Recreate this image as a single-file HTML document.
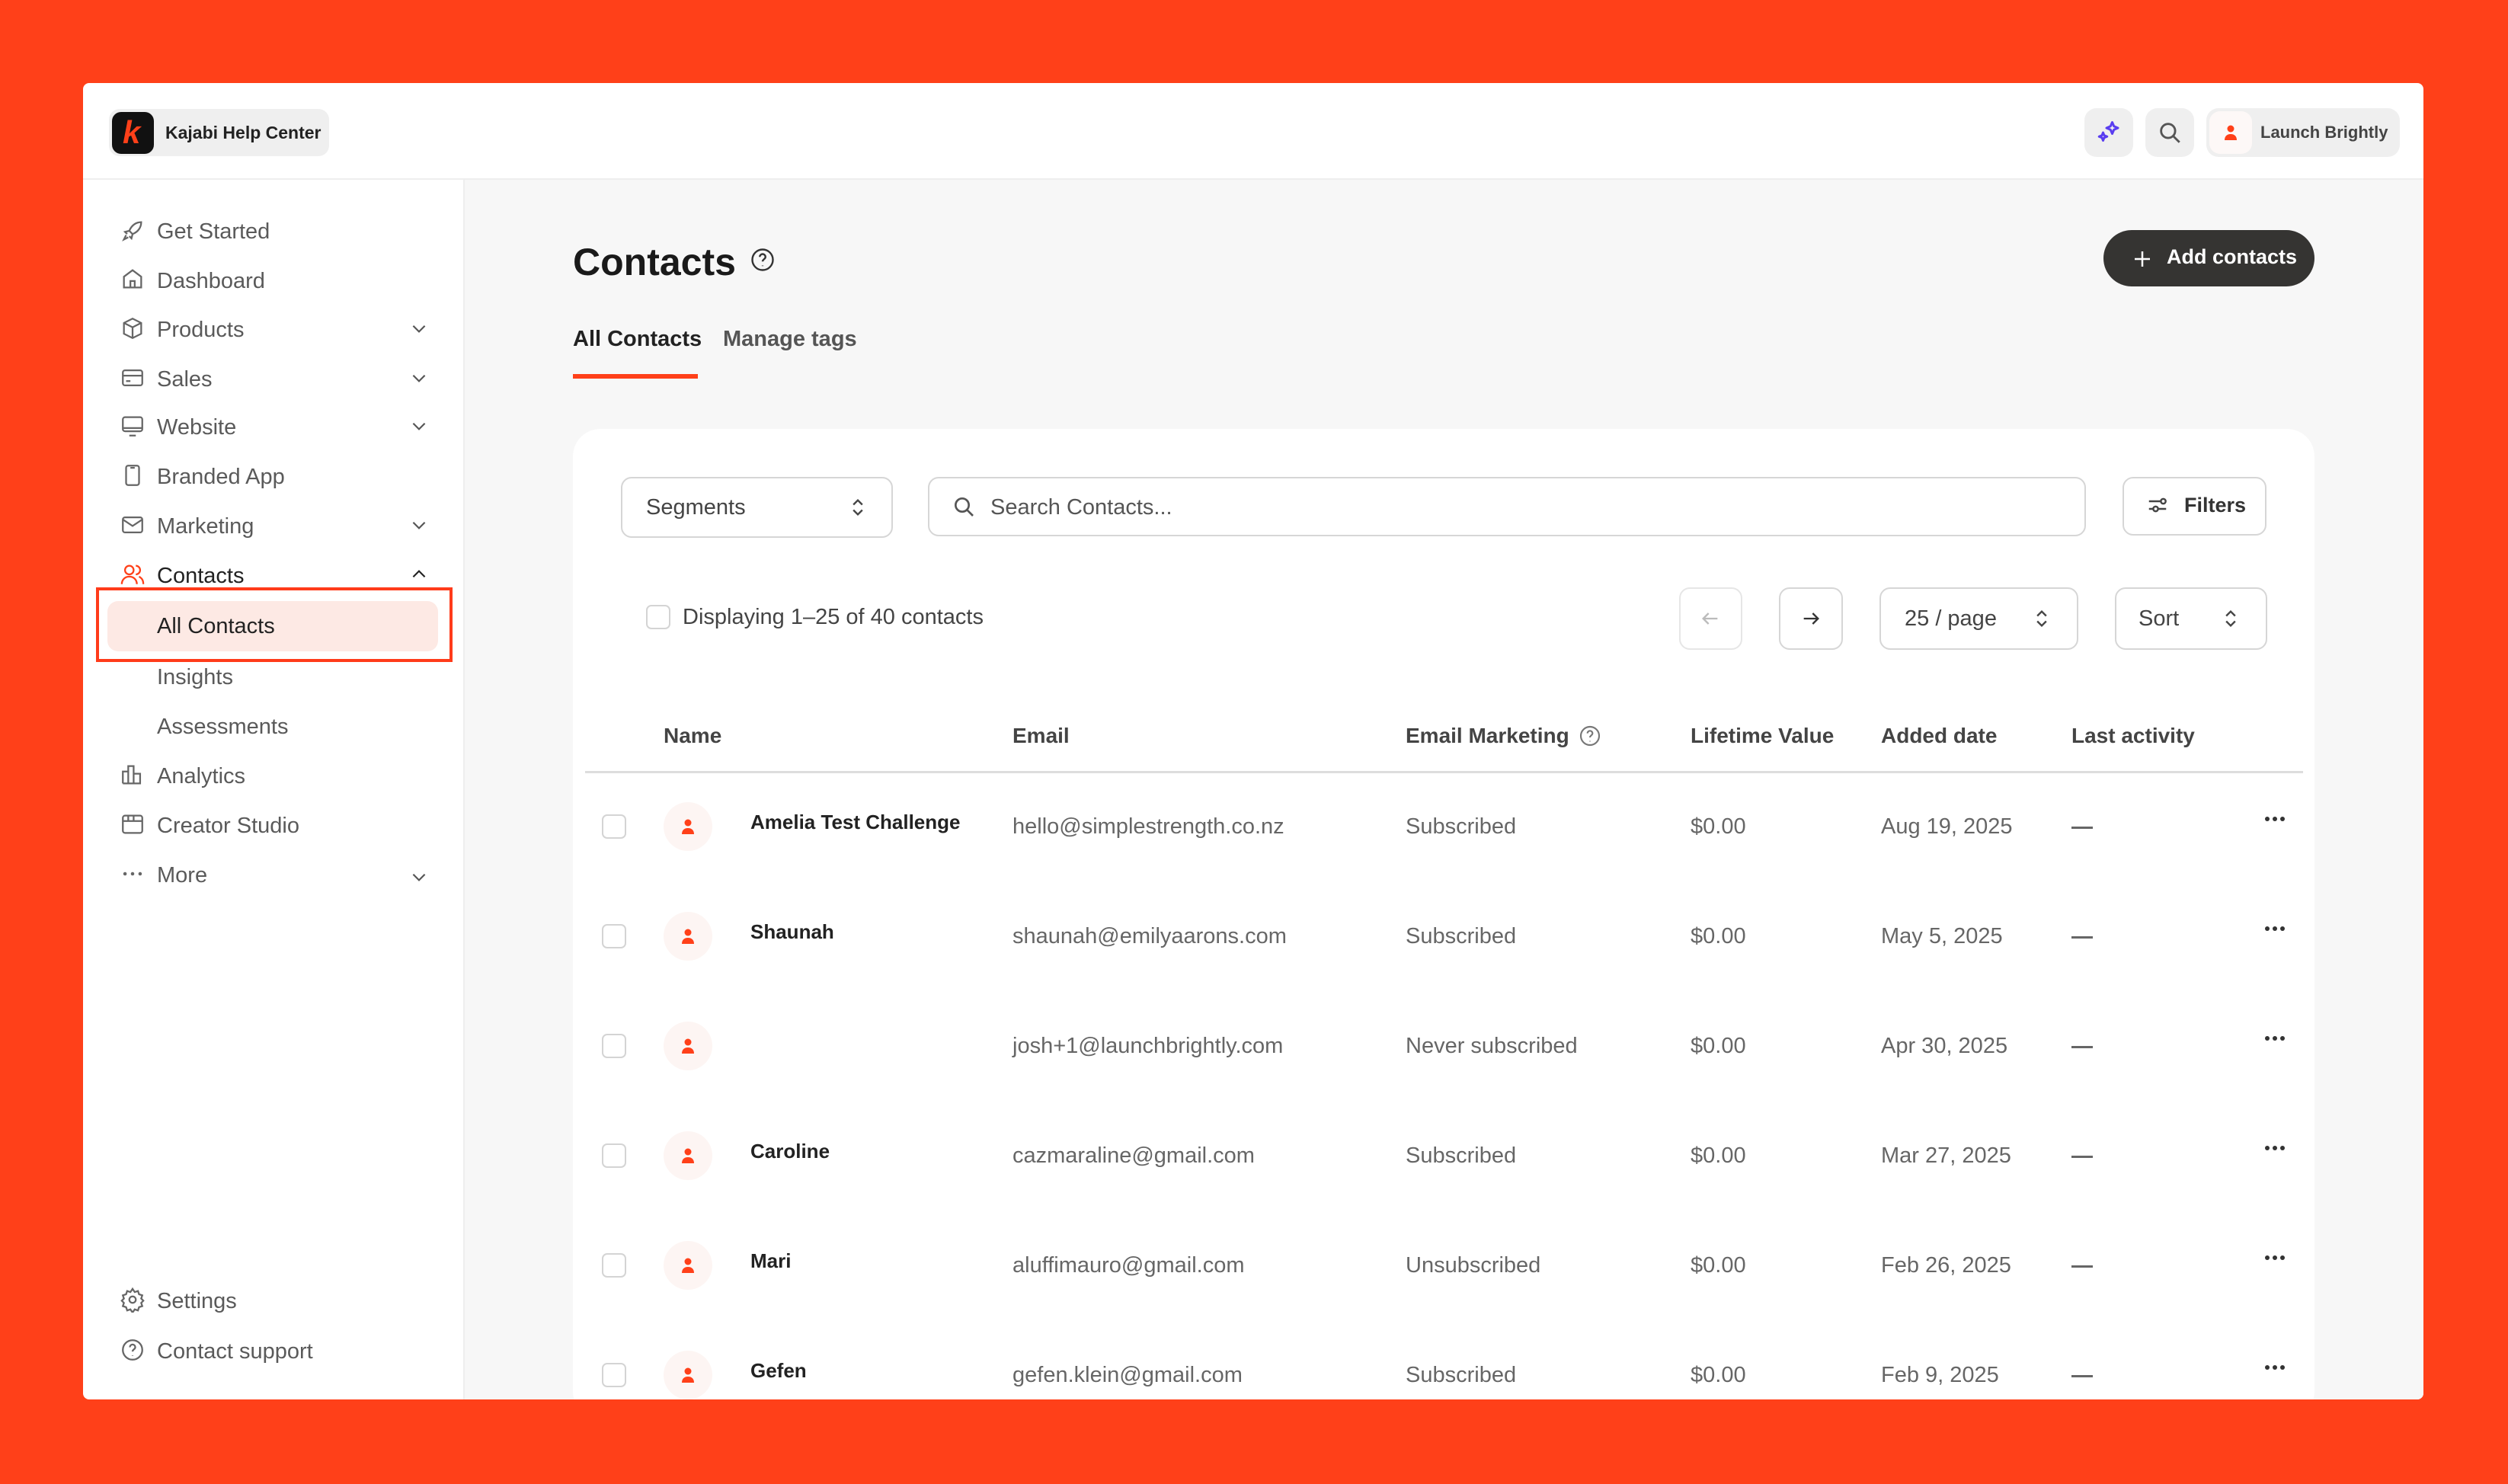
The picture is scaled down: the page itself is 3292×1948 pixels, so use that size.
<!DOCTYPE html>
<html><head><meta charset="utf-8"><style>
*{margin:0;padding:0;box-sizing:border-box}
body{width:3292px;height:1948px;background:#FF4019;font-family:"Liberation Sans",sans-serif;position:relative;overflow:hidden}
.a{position:absolute}
.win{left:109px;top:109px;width:3072px;height:1728px;background:#fff;border-radius:8px;overflow:hidden}
.t{position:absolute;white-space:nowrap;line-height:40px;height:40px}
.nav{font-size:29px;color:#5a5a5a;left:97px}
.ic{position:absolute;left:48px;width:34px;height:34px}
.chev{position:absolute;left:428px;width:26px;height:26px}
.box{position:absolute;border:2px solid #d6d6d6;border-radius:14px;background:#fff}
.th{font-size:28px;color:#444;font-weight:bold;top:837px}
.cell{font-size:29px;color:#666}
.cb{position:absolute;width:32px;height:32px;border:2px solid #d4d4d4;border-radius:7px}
.av{position:absolute;width:64px;height:64px;border-radius:50%;background:#fdf5f3}
</style></head><body>
<div class="a win">
  <div class="a" style="left:0;top:125px;width:3072px;height:2px;background:#eee"></div>
  <div class="a" style="left:34px;top:34px;width:289px;height:62px;background:#efefef;border-radius:14px"></div>
  <div class="a" style="left:38px;top:38px;width:55px;height:55px;background:#111;border-radius:12px"></div>
  <div class="t" style="left:52px;top:41px;font-size:42px;font-weight:bold;font-style:italic;color:#ff4019;line-height:48px">k</div>
  <div class="t" style="left:108px;top:45px;font-size:23px;font-weight:bold;color:#222">Kajabi Help Center</div>

  <div class="a" style="left:2627px;top:33px;width:64px;height:64px;background:#efefef;border-radius:16px"></div>
  <svg class="a" style="left:2641px;top:47px" width="36" height="36" viewBox="0 0 24 24" fill="none" stroke="#5a3ef0" stroke-width="2" stroke-linejoin="round"><path d="M15 3l1.5 3.5L20 8l-3.5 1.5L15 13l-1.5-3.5L10 8l3.5-1.5z"/><path d="M7 12l1 2.5 2.5 1-2.5 1L7 19l-1-2.5-2.5-1 2.5-1z"/></svg>
  <div class="a" style="left:2707px;top:33px;width:64px;height:64px;background:#efefef;border-radius:16px"></div>
  <svg class="a" style="left:2722px;top:48px" width="34" height="34" viewBox="0 0 24 24" fill="none" stroke="#555" stroke-width="2"><circle cx="10.5" cy="10.5" r="6.5"/><path d="M15.5 15.5L21 21"/></svg>
  <div class="a" style="left:2787px;top:33px;width:254px;height:64px;background:#efefef;border-radius:16px"></div>
  <div class="a" style="left:2791px;top:37px;width:56px;height:56px;background:#fdf8f7;border-radius:14px"></div>
  <svg class="a" style="left:2807px;top:53px" width="24" height="24" viewBox="0 0 24 24" fill="#ff4019"><circle cx="12" cy="7" r="4.5"/><path d="M4 22c0-5 3-8 8-8s8 3 8 8z"/></svg>
  <div class="t" style="left:2858px;top:45px;font-size:22px;font-weight:bold;color:#444">Launch Brightly</div>

  <div class="a" style="left:499px;top:127px;width:2px;height:1601px;background:#eee"></div>
  <div class="a" style="left:501px;top:127px;width:2571px;height:1601px;background:#f7f7f7"></div>

  <svg class="ic" style="top:177px" viewBox="0 0 24 24" fill="none" stroke="#666" stroke-width="1.6"><path d="M20 4c-5 0-9 3-11 8l3 3c5-2 8-6 8-11zM9 12l-4 1 2 2M12 15l-1 4-2-2M6 16l-2 4 4-2"/></svg>
  <div class="t nav" style="top:175px">Get Started</div>
  <svg class="ic" style="top:240px" viewBox="0 0 24 24" fill="none" stroke="#666" stroke-width="1.6"><path d="M4 10l8-6 8 6v10H4zM10 20v-6h4v6"/></svg>
  <div class="t nav" style="top:240px">Dashboard</div>
  <svg class="ic" style="top:305px" viewBox="0 0 24 24" fill="none" stroke="#666" stroke-width="1.6"><path d="M12 3l8 4v10l-8 4-8-4V7zM4 7l8 4 8-4M12 11v10"/></svg>
  <div class="t nav" style="top:304px">Products</div>
  <svg class="ic" style="top:370px" viewBox="0 0 24 24" fill="none" stroke="#666" stroke-width="1.6"><rect x="3" y="5" width="18" height="14" rx="2"/><path d="M3 10h18M6 15h4"/></svg>
  <div class="t nav" style="top:369px">Sales</div>
  <svg class="ic" style="top:433px" viewBox="0 0 24 24" fill="none" stroke="#666" stroke-width="1.6"><rect x="3" y="4" width="18" height="13" rx="2"/><path d="M3 14h18M9 21h6"/></svg>
  <div class="t nav" style="top:432px">Website</div>
  <svg class="ic" style="top:498px" viewBox="0 0 24 24" fill="none" stroke="#666" stroke-width="1.6"><rect x="6" y="3" width="12" height="18" rx="2"/><path d="M10 5h4"/></svg>
  <div class="t nav" style="top:497px">Branded App</div>
  <svg class="ic" style="top:563px" viewBox="0 0 24 24" fill="none" stroke="#666" stroke-width="1.6"><rect x="3" y="5" width="18" height="14" rx="2"/><path d="M3 7l9 6 9-6"/></svg>
  <div class="t nav" style="top:562px">Marketing</div>
  <svg class="ic" style="top:628px" viewBox="0 0 24 24" fill="none" stroke="#ff4019" stroke-width="1.6"><circle cx="9" cy="8" r="4"/><path d="M2 21c0-4 3-7 7-7s7 3 7 7M15 4a4 4 0 010 8M18 14c2 1 4 3 4 7"/></svg>
  <div class="t nav" style="top:627px;color:#222">Contacts</div>

  <svg class="chev" style="top:309px" viewBox="0 0 24 24" fill="none" stroke="#555" stroke-width="2"><path d="M5 9l7 7 7-7"/></svg>
  <svg class="chev" style="top:374px" viewBox="0 0 24 24" fill="none" stroke="#555" stroke-width="2"><path d="M5 9l7 7 7-7"/></svg>
  <svg class="chev" style="top:437px" viewBox="0 0 24 24" fill="none" stroke="#555" stroke-width="2"><path d="M5 9l7 7 7-7"/></svg>
  <svg class="chev" style="top:567px" viewBox="0 0 24 24" fill="none" stroke="#555" stroke-width="2"><path d="M5 9l7 7 7-7"/></svg>
  <svg class="chev" style="top:632px" viewBox="0 0 24 24" fill="none" stroke="#222" stroke-width="2"><path d="M5 15l7-7 7 7"/></svg>
  <svg class="chev" style="top:1029px" viewBox="0 0 24 24" fill="none" stroke="#555" stroke-width="2"><path d="M5 9l7 7 7-7"/></svg>

  <div class="a" style="left:17px;top:662px;width:468px;height:98px;border:4px solid #ff3b1a"></div>
  <div class="a" style="left:32px;top:680px;width:434px;height:66px;background:#fde9e4;border-radius:14px"></div>
  <div class="t nav" style="top:693px;color:#222">All Contacts</div>
  <div class="t nav" style="top:760px">Insights</div>
  <div class="t nav" style="top:825px">Assessments</div>
  <svg class="ic" style="top:891px" viewBox="0 0 24 24" fill="none" stroke="#666" stroke-width="1.6"><path d="M3 20V9h5v11M8 20V4h5v16M13 20v-9h6v9zM3 20h16"/></svg>
  <div class="t nav" style="top:890px">Analytics</div>
  <svg class="ic" style="top:956px" viewBox="0 0 24 24" fill="none" stroke="#666" stroke-width="1.6"><rect x="3" y="4" width="18" height="16" rx="2"/><path d="M3 9h18M8 4v5M13 4v5"/></svg>
  <div class="t nav" style="top:955px">Creator Studio</div>
  <svg class="ic" style="top:1021px" viewBox="0 0 24 24" fill="#666"><circle cx="5" cy="12" r="1.6"/><circle cx="12" cy="12" r="1.6"/><circle cx="19" cy="12" r="1.6"/></svg>
  <div class="t nav" style="top:1020px">More</div>
  <svg class="ic" style="top:1580px" viewBox="0 0 24 24" fill="none" stroke="#666" stroke-width="1.6"><circle cx="12" cy="12" r="3"/><path d="M12 2l2 3 3-1 1 3 3 1-1 3 2 2-2 2 1 3-3 1-1 3-3-1-2 3-2-3-3 1-1-3-3-1 1-3-2-2 2-2-1-3 3-1 1-3 3 1z"/></svg>
  <div class="t nav" style="top:1579px">Settings</div>
  <svg class="ic" style="top:1646px" viewBox="0 0 24 24" fill="none" stroke="#666" stroke-width="1.6"><circle cx="12" cy="12" r="9"/><path d="M9.5 9.5a2.5 2.5 0 115 0c0 2-2.5 2-2.5 4M12 17v.5"/></svg>
  <div class="t nav" style="top:1645px">Contact support</div>

  <div class="t" style="left:643px;top:205px;font-size:50px;font-weight:bold;color:#1a1a1a;line-height:60px;height:60px">Contacts</div>
  <svg class="a" style="left:874px;top:214px" width="36" height="36" viewBox="0 0 24 24" fill="none" stroke="#333" stroke-width="1.6"><circle cx="12" cy="12" r="9"/><path d="M9.5 9.5a2.5 2.5 0 115 0c0 2-2.5 2-2.5 4M12 17v.5"/></svg>
  <div class="a" style="left:2652px;top:193px;width:277px;height:74px;background:#353432;border-radius:37px"></div>
  <svg class="a" style="left:2688px;top:216px" width="30" height="30" viewBox="0 0 24 24" fill="none" stroke="#fff" stroke-width="2"><path d="M12 4v16M4 12h16"/></svg>
  <div class="t" style="left:2735px;top:208px;font-size:27px;font-weight:bold;color:#fff">Add contacts</div>

  <div class="t" style="left:643px;top:316px;font-size:29px;color:#222;font-weight:bold">All Contacts</div>
  <div class="t" style="left:840px;top:316px;font-size:29px;color:#555;font-weight:bold">Manage tags</div>
  <div class="a" style="left:643px;top:382px;width:164px;height:6px;background:#ff4019"></div>

  <div class="a" style="left:643px;top:454px;width:2286px;height:1300px;background:#fff;border-radius:36px"></div>
  <div class="box" style="left:706px;top:517px;width:357px;height:80px"></div>
  <div class="t" style="left:739px;top:537px;font-size:29px;color:#444">Segments</div>
  <svg class="a" style="left:1003px;top:542px" width="28" height="30" viewBox="0 0 24 24" fill="none" stroke="#444" stroke-width="2"><path d="M7 9l5-5 5 5M7 15l5 5 5-5"/></svg>
  <div class="box" style="left:1109px;top:517px;width:1520px;height:78px"></div>
  <svg class="a" style="left:1140px;top:540px" width="32" height="32" viewBox="0 0 24 24" fill="none" stroke="#555" stroke-width="2"><circle cx="10.5" cy="10.5" r="6.5"/><path d="M15.5 15.5L21 21"/></svg>
  <div class="t" style="left:1191px;top:537px;font-size:29px;color:#555">Search Contacts...</div>
  <div class="box" style="left:2677px;top:517px;width:189px;height:77px"></div>
  <svg class="a" style="left:2708px;top:539px" width="30" height="30" viewBox="0 0 24 24" fill="none" stroke="#444" stroke-width="2"><path d="M3 8h12M3 16h4M13 16h8"/><circle cx="18" cy="8" r="2.5"/><circle cx="10" cy="16" r="2.5"/></svg>
  <div class="t" style="left:2758px;top:534px;font-size:27px;color:#333;font-weight:bold">Filters</div>

  <div class="a" style="left:739px;top:685px;width:32px;height:32px;border:2px solid #d4d4d4;border-radius:7px"></div>
  <div class="t" style="left:787px;top:681px;font-size:29px;color:#444">Displaying 1–25 of 40 contacts</div>
  <div class="box" style="left:2095px;top:662px;width:83px;height:82px;border-color:#e6e6e6"></div>
  <svg class="a" style="left:2122px;top:689px" width="28" height="28" viewBox="0 0 24 24" fill="none" stroke="#bbb" stroke-width="2"><path d="M20 12H4M10 6l-6 6 6 6"/></svg>
  <div class="box" style="left:2226px;top:662px;width:84px;height:82px"></div>
  <svg class="a" style="left:2254px;top:689px" width="28" height="28" viewBox="0 0 24 24" fill="none" stroke="#333" stroke-width="2"><path d="M4 12h16M14 6l6 6-6 6"/></svg>
  <div class="box" style="left:2358px;top:662px;width:261px;height:82px"></div>
  <div class="t" style="left:2391px;top:683px;font-size:29px;color:#444">25 / page</div>
  <svg class="a" style="left:2557px;top:688px" width="28" height="30" viewBox="0 0 24 24" fill="none" stroke="#444" stroke-width="2"><path d="M7 9l5-5 5 5M7 15l5 5 5-5"/></svg>
  <div class="box" style="left:2667px;top:662px;width:200px;height:82px"></div>
  <div class="t" style="left:2698px;top:683px;font-size:29px;color:#444">Sort</div>
  <svg class="a" style="left:2805px;top:688px" width="28" height="30" viewBox="0 0 24 24" fill="none" stroke="#444" stroke-width="2"><path d="M7 9l5-5 5 5M7 15l5 5 5-5"/></svg>

  <div class="t th" style="left:762px">Name</div>
  <div class="t th" style="left:1220px">Email</div>
  <div class="t th" style="left:1736px">Email Marketing</div>
  <svg class="a" style="left:1962px;top:841px" width="32" height="32" viewBox="0 0 24 24" fill="none" stroke="#777" stroke-width="1.6"><circle cx="12" cy="12" r="9"/><path d="M9.5 9.5a2.5 2.5 0 115 0c0 2-2.5 2-2.5 4M12 17v.5"/></svg>
  <div class="t th" style="left:2110px">Lifetime Value</div>
  <div class="t th" style="left:2360px">Added date</div>
  <div class="t th" style="left:2610px">Last activity</div>
  <div class="a" style="left:659px;top:903px;width:2255px;height:3px;background:#ddd"></div>
</div>
<script>
var d=[["Amelia Test Challenge","hello@simplestrength.co.nz","Subscribed","Aug 19, 2025"],
["Shaunah","shaunah@emilyaarons.com","Subscribed","May 5, 2025"],
["","josh+1@launchbrightly.com","Never subscribed","Apr 30, 2025"],
["Caroline","cazmaraline@gmail.com","Subscribed","Mar 27, 2025"],
["Mari","aluffimauro@gmail.com","Unsubscribed","Feb 26, 2025"],
["Gefen","gefen.klein@gmail.com","Subscribed","Feb 9, 2025"]];
var w=document.querySelector('.win'),h='';
d.forEach(function(r,i){var c=976+i*144;
h+='<div class="cb" style="left:681px;top:'+(c-16)+'px"></div>';
h+='<div class="av" style="left:762px;top:'+(c-32)+'px"></div>';
h+='<svg class="a" style="left:782px;top:'+(c-12)+'px" width="24" height="24" viewBox="0 0 24 24" fill="#ff4019"><circle cx="12" cy="7" r="4.5"/><path d="M4 22c0-5 3-8 8-8s8 3 8 8z"/></svg>';
h+='<div class="t" style="left:876px;top:'+(c-26)+'px;font-size:26px;font-weight:bold;color:#222">'+r[0]+'</div>';
h+='<div class="t cell" style="left:1220px;top:'+(c-20)+'px">'+r[1]+'</div>';
h+='<div class="t cell" style="left:1736px;top:'+(c-20)+'px">'+r[2]+'</div>';
h+='<div class="t cell" style="left:2110px;top:'+(c-20)+'px">$0.00</div>';
h+='<div class="t cell" style="left:2360px;top:'+(c-20)+'px">'+r[3]+'</div>';
h+='<div class="a" style="left:2610px;top:'+c+'px;width:28px;height:3px;background:#666"></div>';
h+='<svg class="a" style="left:2862px;top:'+(c-14)+'px" width="30" height="8" viewBox="0 0 30 8" fill="#333"><circle cx="5" cy="4" r="3"/><circle cx="15" cy="4" r="3"/><circle cx="25" cy="4" r="3"/></svg>';
});
w.insertAdjacentHTML('beforeend',h);
</script>
</body></html>
